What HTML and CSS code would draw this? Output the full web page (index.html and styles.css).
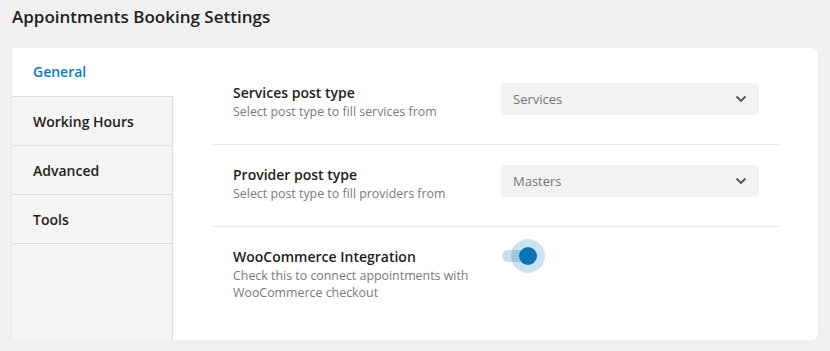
FILE: index.html
```html
<!DOCTYPE html>
<html lang="en">
<head>
  <meta charset="UTF-8" />
  <title>Appointments Booking Settings</title>
  <link rel="stylesheet" href="styles.css">
</head>
<body>
  <h1 class="page-title">Appointments Booking Settings</h1>

  <div class="settings-card">
    <nav class="tabs">
      <div class="tab active">General</div>
      <div class="tab">Working Hours</div>
      <div class="tab">Advanced</div>
      <div class="tab">Tools</div>
    </nav>

    <div class="panel">
      <div class="row">
        <div class="info">
          <h3>Services post type</h3>
          <p>Select post type to fill services from</p>
        </div>
        <div class="select">
          <span>Services</span>
          <svg width="12" height="8" viewBox="0 0 12 8"><path d="M1.5 1.5 L6 6 L10.5 1.5" fill="none" stroke="#555" stroke-width="1.8"/></svg>
        </div>
      </div>

      <div class="row">
        <div class="info">
          <h3>Provider post type</h3>
          <p>Select post type to fill providers from</p>
        </div>
        <div class="select">
          <span>Masters</span>
          <svg width="12" height="8" viewBox="0 0 12 8"><path d="M1.5 1.5 L6 6 L10.5 1.5" fill="none" stroke="#555" stroke-width="1.8"/></svg>
        </div>
      </div>

      <div class="row">
        <div class="info">
          <h3>WooCommerce Integration</h3>
          <p>Check this to connect appointments with WooCommerce checkout</p>
        </div>
        <div class="toggle on">
          <span class="track"></span>
          <span class="knob"></span>
        </div>
      </div>
    </div>
  </div>
</body>
</html>
```

FILE: styles.css
```css
* {
  margin: 0;
  padding: 0;
  box-sizing: border-box;
}
body {
  font-family: 'Open Sans', 'Noto Sans', sans-serif;
  background-color: #f0f0f0;
  color: #1e1e1e;
  padding: 0 12px;
}
.page-title {
  font-size: 17px;
  font-weight: 600;
  line-height: 24px;
  padding-top: 5px;
  height: 48px;
  color: #1e1e1e;
}
.settings-card {
  display: flex;
  background-color: white;
  border-radius: 0 6px 6px 0;
  box-shadow: 0 1px 3px rgba(0,0,0,0.06);
  width: 806px;
  height: 292px;
}
.tabs {
  width: 161px;
  background-color: #f4f4f4;
  border-right: 1px solid #dcdcdc;
}
.tab {
  height: 49px;
  padding: 0 21px;
  display: flex;
  align-items: center;
  font-size: 14px;
  font-weight: 600;
  color: #1e1e1e;
  border-bottom: 1px solid #dcdcdc;
}
.tab.active {
  background-color: white;
  color: #0a7abf;
  margin-right: -1px;
  padding-bottom: 2px;
}
.panel {
  flex: 1;
  padding: 15px 39px 0 40px;
}
.row {
  display: flex;
  align-items: flex-start;
  border-bottom: 1px solid #e8e8e8;
  padding: 20px 0 24px 20px;
}
.row:last-child {
  border-bottom: none;
}
.info {
  width: 268px;
}
.info h3 {
  font-size: 14px;
  font-weight: 600;
  line-height: 20px;
  color: #1e1e1e;
}
.info p {
  font-size: 12.4px;
  line-height: 17px;
  color: #7a7a7a;
}
.select {
  width: 258px;
  height: 32px;
  background-color: #f2f2f2;
  border-radius: 4px;
  display: flex;
  align-items: center;
  justify-content: space-between;
  padding: 0 12px;
  font-size: 13px;
  color: #757575;
}
.toggle {
  position: relative;
  width: 46px;
  height: 18px;
}
.toggle .track {
  position: absolute;
  left: 1px;
  top: 3px;
  width: 34px;
  height: 12px;
  border-radius: 6px;
  background-color: #c4dfee;
}
.toggle .knob {
  position: absolute;
  left: 18px;
  top: 0;
  width: 18px;
  height: 18px;
  border-radius: 50%;
  background-color: #0a73b5;
  box-shadow: 0 0 0 8px rgba(10,115,181,0.2);
}
```
